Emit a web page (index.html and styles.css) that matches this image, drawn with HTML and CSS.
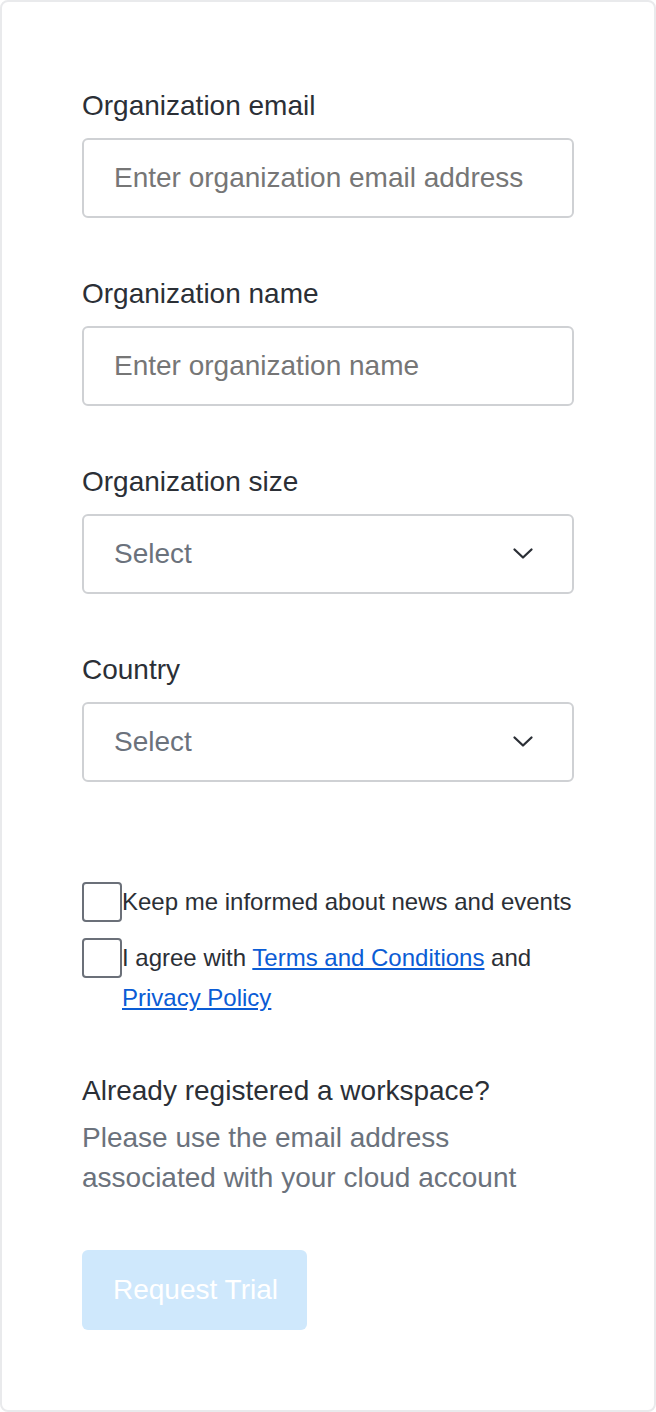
FILE: index.html
```html
<!DOCTYPE html>
<html lang="en">
<head>
<meta charset="utf-8">
<title>Request Trial</title>
<link rel="stylesheet" href="styles.css">
</head>
<body>
<form class="card">
  <div class="field">
    <label class="label" for="email">Organization email</label>
    <input class="control" id="email" type="text" placeholder="Enter organization email address">
  </div>
  <div class="field">
    <label class="label" for="name">Organization name</label>
    <input class="control" id="name" type="text" placeholder="Enter organization name">
  </div>
  <div class="field">
    <label class="label">Organization size</label>
    <div class="control select">
      <span class="select-text">Select</span>
      <svg class="chevron" width="22" height="13" viewBox="0 0 22 13"><path d="M2.5 2.5 L11 10.5 L19.5 2.5" fill="none" stroke="#2b2f36" stroke-width="2.3" stroke-linecap="round" stroke-linejoin="round"/></svg>
    </div>
  </div>
  <div class="field field-last">
    <label class="label">Country</label>
    <div class="control select">
      <span class="select-text">Select</span>
      <svg class="chevron" width="22" height="13" viewBox="0 0 22 13"><path d="M2.5 2.5 L11 10.5 L19.5 2.5" fill="none" stroke="#2b2f36" stroke-width="2.3" stroke-linecap="round" stroke-linejoin="round"/></svg>
    </div>
  </div>

  <div class="checks">
    <label class="check-row">
      <input class="checkbox" type="checkbox">
      <span class="check-text">Keep me informed about news and events</span>
    </label>
    <label class="check-row">
      <input class="checkbox" type="checkbox">
      <span class="check-text">I agree with <a class="link" href="#">Terms and Conditions</a> and <a class="link" href="#">Privacy Policy</a></span>
    </label>
  </div>

  <h2 class="heading">Already registered a workspace?</h2>
  <p class="note">Please use the email address associated with your cloud account</p>

  <button class="submit" type="button">Request Trial</button>
</form>
</body>
</html>
```

FILE: styles.css
```css
* { box-sizing: border-box; }

html, body {
  margin: 0;
  padding: 0;
  background: #ffffff;
}

body {
  font-family: "Liberation Sans", Arial, sans-serif;
  color: #2b2f36;
}

.card {
  width: 656px;
  min-height: 1412px;
  border: 2px solid #e9eaec;
  border-radius: 8px;
  padding: 86px 80px 80px 80px;
  background: #ffffff;
  display: flex;
  flex-direction: column;
}

.field {
  display: flex;
  flex-direction: column;
  margin-bottom: 58px;
}

.field-last {
  margin-bottom: 100px;
}

.label {
  font-size: 28px;
  line-height: 36px;
  margin-bottom: 14px;
  color: #2b2f36;
}

.control {
  width: 492px;
  height: 80px;
  border: 2px solid #cfd1d4;
  border-radius: 6px;
  padding: 0 30px;
  font-family: "Liberation Sans", Arial, sans-serif;
  font-size: 28px;
  color: #2b2f36;
  background: #ffffff;
  outline: none;
  margin: 0;
}

.control::placeholder {
  color: #767676;
  opacity: 1;
}

.select {
  display: flex;
  align-items: center;
  justify-content: space-between;
  padding-right: 38px;
}

.select-text {
  color: #6b727c;
}

.chevron {
  display: block;
  margin-top: -1px;
}

.checks {
  display: flex;
  flex-direction: column;
  gap: 16px;
}

.check-row {
  display: flex;
  align-items: flex-start;
  font-size: 24px;
  line-height: 40px;
  color: #2b2f36;
}

.checkbox {
  appearance: none;
  -webkit-appearance: none;
  width: 40px;
  height: 40px;
  margin: 0;
  flex-shrink: 0;
  border: 2px solid #6b7079;
  border-radius: 4px;
  background: #ffffff;
}

.check-text {
  flex: 1;
}

.link {
  color: #0b5cd5;
  text-decoration: underline;
}

.heading {
  margin: 53px 0 0 0;
  font-size: 28px;
  line-height: 40px;
  font-weight: normal;
  color: #2b2f36;
}

.note {
  margin: 7px 0 0 0;
  font-size: 28px;
  line-height: 40px;
  color: #6b727c;
  width: 460px;
}

.submit {
  align-self: flex-start;
  margin-top: 52px;
  height: 80px;
  padding: 0 29px 0 31px;
  border: none;
  border-radius: 6px;
  background: #cfe8fc;
  color: #ffffff;
  font-family: "Liberation Sans", Arial, sans-serif;
  font-size: 28px;
}
```
